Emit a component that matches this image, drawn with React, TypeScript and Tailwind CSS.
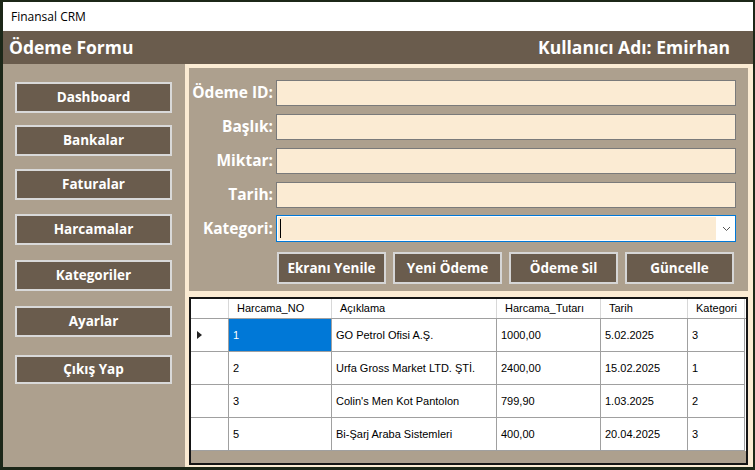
import React from "react";

const menu = [
  { label: "Dashboard", cls: "mt-[18px] h-[31px]" },
  { label: "Bankalar", cls: "mt-[12px] h-[31px]" },
  { label: "Faturalar", cls: "mt-[13px] h-[31px]" },
  { label: "Harcamalar", cls: "mt-[14px] h-[31px]" },
  { label: "Kategoriler", cls: "mt-[15px] h-[31px]" },
  { label: "Ayarlar", cls: "mt-[15px] h-[31px]" },
  { label: "Çıkış Yap", cls: "mt-[18px] h-[29px]" },
];

const fields = ["Ödeme ID:", "Başlık:", "Miktar:", "Tarih:"];

const actions = ["Ekranı Yenile", "Yeni Ödeme", "Ödeme Sil", "Güncelle"];

const columns = ["Harcama_NO", "Açıklama", "Harcama_Tutarı", "Tarih", "Kategori"];

const rows = [
  ["1", "GO Petrol Ofisi A.Ş.", "1000,00", "5.02.2025", "3"],
  ["2", "Urfa Gross Market LTD. ŞTİ.", "2400,00", "15.02.2025", "1"],
  ["3", "Colin's Men Kot Pantolon", "799,90", "1.03.2025", "2"],
  ["5", "Bi-Şarj Araba Sistemleri", "400,00", "20.04.2025", "3"],
];

const ui = { fontFamily: '"Open Sans", "Noto Sans", sans-serif' };
const grid = { fontFamily: '"Liberation Sans", Arial, sans-serif' };

export default function App() {
  return (
    <div className="w-[755px] h-[470px] overflow-hidden bg-[#1c2718] pt-[2px] pl-[3px]" style={ui}>
      <div className="w-[750px] h-[465px] flex flex-col">
        {/* title bar */}
        <div className="h-[29px] bg-white flex items-center pl-[8px] text-[12px] text-black">
          Finansal CRM
        </div>

        {/* header */}
        <div className="h-[33px] bg-[#6a5c4d] flex items-center justify-between pl-[6px] pr-[23px] text-white font-bold text-[17.5px]">
          <span>Ödeme Formu</span>
          <span>Kullanıcı Adı: Emirhan</span>
        </div>

        <div className="flex-1 flex">
          {/* sidebar */}
          <div className="w-[182px] bg-[#ada08e] flex flex-col pl-[12px]">
            {menu.map((m) => (
              <button
                key={m.label}
                className={`${m.cls} w-[157px] bg-[#6a5c4d] border-2 border-[#d9d9d9] text-white font-bold text-[13.5px] flex items-center justify-center`}
              >
                {m.label}
              </button>
            ))}
          </div>

          {/* content */}
          <div className="flex-1 bg-[#fbebd3] pt-[4px] pl-[4px] pr-[5px] flex flex-col">
            <div className="h-[223px] bg-[#ada08e] pt-[12px] pr-[12px] flex flex-col">
              {fields.map((f) => (
                <div key={f} className="flex items-center h-[26px] mb-[8px]">
                  <label className="w-[87px] pr-[3px] text-right text-white font-bold text-[15.5px] whitespace-nowrap">{f}</label>
                  <div className="flex-1 h-[26px] bg-[#fbebd3] border border-[#7a7a7a]" />
                </div>
              ))}
              <div className="flex items-center h-[27px] -mt-[1px]">
                <label className="w-[87px] pr-[3px] text-right text-white font-bold text-[15.5px] whitespace-nowrap">Kategori:</label>
                <div className="flex-1 h-[27px] border border-[#0078d7] flex bg-white">
                  <div className="flex-1 bg-[#fbebd3] m-[1px] flex items-center pl-[2px]">
                    <div className="w-[1px] h-[19px] bg-black" />
                  </div>
                  <div className="w-[18px] flex items-center justify-center">
                    <svg width="9" height="6" viewBox="0 0 9 6">
                      <path d="M1 1 L4.5 4.5 L8 1" fill="none" stroke="#555" strokeWidth="1" />
                    </svg>
                  </div>
                </div>
              </div>
              <div className="flex gap-[7px] pl-[88px] mt-[10px]">
                {actions.map((a) => (
                  <button
                    key={a}
                    className="w-[109px] h-[32px] bg-[#6a5c4d] border-2 border-[#d6d6d6] text-white font-bold text-[13.5px] flex items-center justify-center"
                  >
                    {a}
                  </button>
                ))}
              </div>
            </div>

            {/* data grid */}
            <div className="mt-[6px] h-[168px] border-2 border-[#151515] bg-[#ada08e] flex flex-col text-[11px] text-black" style={grid}>
              <div className="grid grid-cols-[38px_103px_165px_104px_87px_57px] h-[20px] bg-white border-b border-[#a0a0a0]">
                <div className="border-r border-[#d8d8d8]" />
                {columns.map((c) => (
                  <div key={c} className="border-r border-[#d8d8d8] pl-[8px] flex items-center whitespace-nowrap overflow-hidden">
                    {c}
                  </div>
                ))}
              </div>
              {rows.map((r, i) => (
                <div key={i} className="grid grid-cols-[38px_103px_165px_104px_87px_57px] h-[33px] bg-white">
                  <div className="border-r border-b border-[#a0a0a0] flex items-center pl-[6px]">
                    {i === 0 && (
                      <svg width="5" height="8" viewBox="0 0 5 8">
                        <path d="M0 0 L5 4 L0 8 Z" fill="#222" />
                      </svg>
                    )}
                  </div>
                  {r.map((c, j) => (
                    <div
                      key={j}
                      className={`border-r border-b border-[#a0a0a0] flex items-center pl-[4px] whitespace-nowrap overflow-hidden ${
                        i === 0 && j === 0 ? "bg-[#0078d7] text-white" : ""
                      }`}
                    >
                      {c}
                    </div>
                  ))}
                </div>
              ))}
            </div>
          </div>
        </div>
      </div>
    </div>
  );
}
